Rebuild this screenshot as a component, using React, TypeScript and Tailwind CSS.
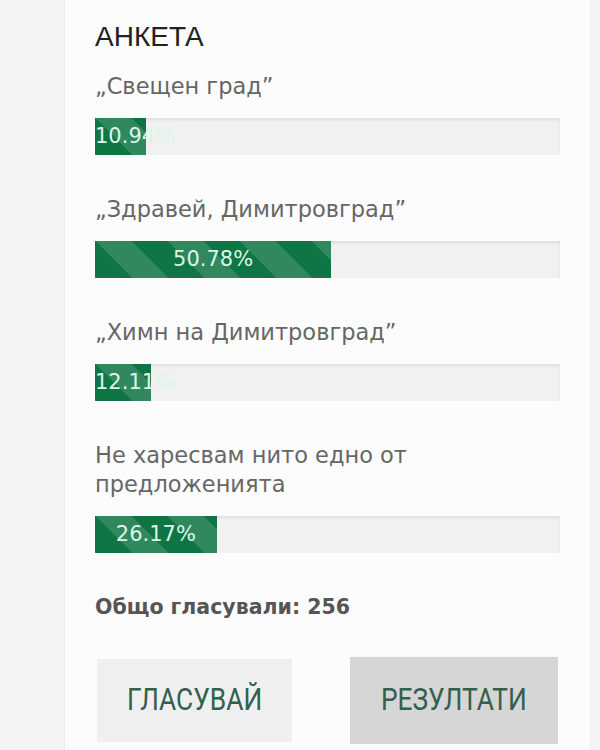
const OPTIONS = [
  { label: '„Свещен град”', pct: 10.94 },
  { label: '„Здравей, Димитровград”', pct: 50.78 },
  { label: '„Химн на Димитровград”', pct: 12.11 },
  { label: 'Не харесвам нито едно от предложенията', pct: 26.17 },
]

const stripes =
  'bg-[linear-gradient(45deg,rgba(255,255,255,0.14)_25%,transparent_25%,transparent_50%,rgba(255,255,255,0.14)_50%,rgba(255,255,255,0.14)_75%,transparent_75%,transparent)] bg-[length:72px_72px]'

function PollBar({ pct }: { pct: number }) {
  return (
    <div className="h-[37px] w-full bg-[#f1f1f1] shadow-[inset_0_2px_3px_rgba(0,0,0,0.08)]">
      <div
        className={`h-full bg-[#0f7545] ${stripes} text-center whitespace-nowrap text-[21px] leading-[37px] text-[#d9f6e6]`}
        style={{ width: `${pct}%` }}
      >
        {pct.toFixed(2)}%
      </div>
    </div>
  )
}

export default function App() {
  return (
    <div className="flex w-[600px] h-[750px] overflow-hidden bg-[#f3f3f3] font-['DejaVu_Sans',sans-serif]">
      <div className="w-[64px] shrink-0" />
      <div className="w-[526px] shrink-0 bg-[#fcfcfc] border-l border-[#ececec] pl-[30px] pr-[30px] pt-[21px]">
        <h3 className="text-[28px] leading-[32px] text-[#222] font-['Liberation_Sans',sans-serif]">АНКЕТА</h3>

        <div className="mt-[19px]">
          {OPTIONS.map((o, i) => (
            <div key={o.label} className={i > 0 ? 'mt-[40px]' : ''}>
              <p className="text-[22.5px] leading-[29px] text-[#666] pr-[100px]">{o.label}</p>
              <div className="mt-[17px]">
                <PollBar pct={o.pct} />
              </div>
            </div>
          ))}
        </div>

        <p className="mt-[41px] text-[20.5px] leading-[26px] font-bold text-[#555]">Общо гласували: 256</p>

        <div className="mt-[37px] flex items-center justify-between">
          <button className="ml-[2px] w-[195px] h-[83px] bg-[#efefef] text-[#31604c] font-['Roboto',sans-serif]">
            <span className="inline-block text-[31px] scale-x-[0.85]">ГЛАСУВАЙ</span>
          </button>
          <button className="mr-[2px] w-[208px] h-[87px] bg-[#d6d6d6] text-[#31604c] font-['Roboto',sans-serif]">
            <span className="inline-block text-[31px] scale-x-[0.85]">РЕЗУЛТАТИ</span>
          </button>
        </div>
      </div>
      <div className="flex-1" />
    </div>
  )
}
